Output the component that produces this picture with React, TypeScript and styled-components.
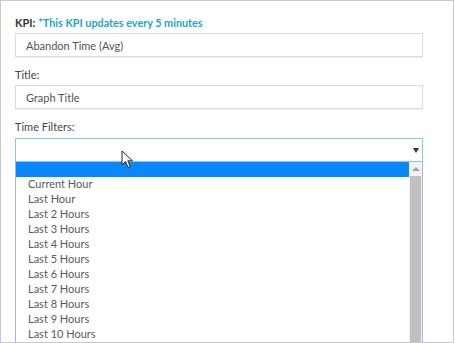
import React from "react";
import styled, { createGlobalStyle } from "styled-components";

const GlobalStyle = createGlobalStyle`
  html, body {
    margin: 0;
    padding: 0;
    background: #ffffff;
  }
  body {
    font-family: Lato, "Open Sans", "Liberation Sans", sans-serif;
  }
`;

const Frame = styled.div`
  box-sizing: border-box;
  width: 454px;
  height: 343px;
  border: 1px solid #c8c8c8;
  overflow: hidden;
  position: relative;
  padding: 14px 30px 0 14px;
  display: flex;
  flex-direction: column;
  gap: 10px;
`;

const Field = styled.div`
  display: flex;
  flex-direction: column;
  gap: 2px;
`;

const Label = styled.div`
  font-size: 11px;
  line-height: 16px;
  color: #444;
  span {
    color: #1ba6cc;
    font-weight: 700;
    font-size: 10.8px;
  }
`;

const Strong = styled.b`
  font-weight: 700;
  color: #333;
`;

const Input = styled.div<{ $focus?: boolean }>`
  box-sizing: border-box;
  height: 24px;
  border: 1px solid ${(p) => (p.$focus ? "#7ccfe3" : "#dcdcdc")};
  box-shadow: ${(p) => (p.$focus ? "none" : "0 1px 1px rgba(0,0,0,0.06)")};
  padding: 0 10px;
  display: flex;
  align-items: center;
  justify-content: space-between;
  font-size: 11px;
  color: #555;
  background: #fff;
`;

const Arrow = styled.div`
  width: 0;
  height: 0;
  border-left: 3px solid transparent;
  border-right: 3px solid transparent;
  border-top: 5px solid #333;
  margin-right: -7px;
`;

const SelectWrap = styled.div`
  display: flex;
  flex-direction: column;
  margin-top: 1px;
`;

const ListBox = styled.div`
  display: flex;
  border-left: 1px solid #9db7e4;
  border-right: 1px solid #9db7e4;
  height: 200px;
  background: #fff;
`;

const Options = styled.div`
  flex: 1;
  display: flex;
  flex-direction: column;
`;

const Option = styled.div<{ $active?: boolean }>`
  height: 15px;
  line-height: 14px;
  font-size: 11px;
  padding-left: 12px;
  color: #5a5a5a;
  background: ${(p) => (p.$active ? "#0a87fc" : "transparent")};
`;

const Scrollbar = styled.div`
  width: 13px;
  background: #f1f1f1;
  display: flex;
  flex-direction: column;
  align-items: center;
`;

const ScrollUp = styled.div`
  height: 14px;
  display: flex;
  align-items: center;
  justify-content: center;
  &::before {
    content: "";
    border-left: 4px solid transparent;
    border-right: 4px solid transparent;
    border-bottom: 4px solid #a3a3a3;
  }
`;

const Thumb = styled.div`
  width: 11px;
  flex: 1;
  background: #c1c1c1;
`;

const Cursor = styled.svg`
  position: absolute;
  left: 120px;
  top: 149px;
`;

const options = [
  "",
  "Current Hour",
  "Last Hour",
  "Last 2 Hours",
  "Last 3 Hours",
  "Last 4 Hours",
  "Last 5 Hours",
  "Last 6 Hours",
  "Last 7 Hours",
  "Last 8 Hours",
  "Last 9 Hours",
  "Last 10 Hours",
];

export default function App() {
  return (
    <>
      <GlobalStyle />
      <Frame>
        <Field>
          <Label>
            <Strong>KPI:</Strong> <span>*This KPI updates every 5 minutes</span>
          </Label>
          <Input>Abandon Time (Avg)</Input>
        </Field>
        <Field>
          <Label>Title:</Label>
          <Input>Graph Title</Input>
        </Field>
        <Field>
          <Label>Time Filters:</Label>
          <SelectWrap>
            <Input $focus>
              <span />
              <Arrow />
            </Input>
            <ListBox>
              <Options>
                {options.map((o, i) => (
                  <Option key={i} $active={i === 0}>
                    {o}
                  </Option>
                ))}
              </Options>
              <Scrollbar>
                <ScrollUp />
                <Thumb />
              </Scrollbar>
            </ListBox>
          </SelectWrap>
        </Field>
        <Cursor width="14" height="20" viewBox="0 0 14 20">
          <path
            d="M1 1 L1 15 L4.5 11.5 L7 17.5 L9.3 16.5 L6.8 10.8 L11.5 10.8 Z"
            fill="#fff"
            stroke="#222"
            strokeWidth="1"
            strokeLinejoin="round"
          />
        </Cursor>
      </Frame>
    </>
  );
}
